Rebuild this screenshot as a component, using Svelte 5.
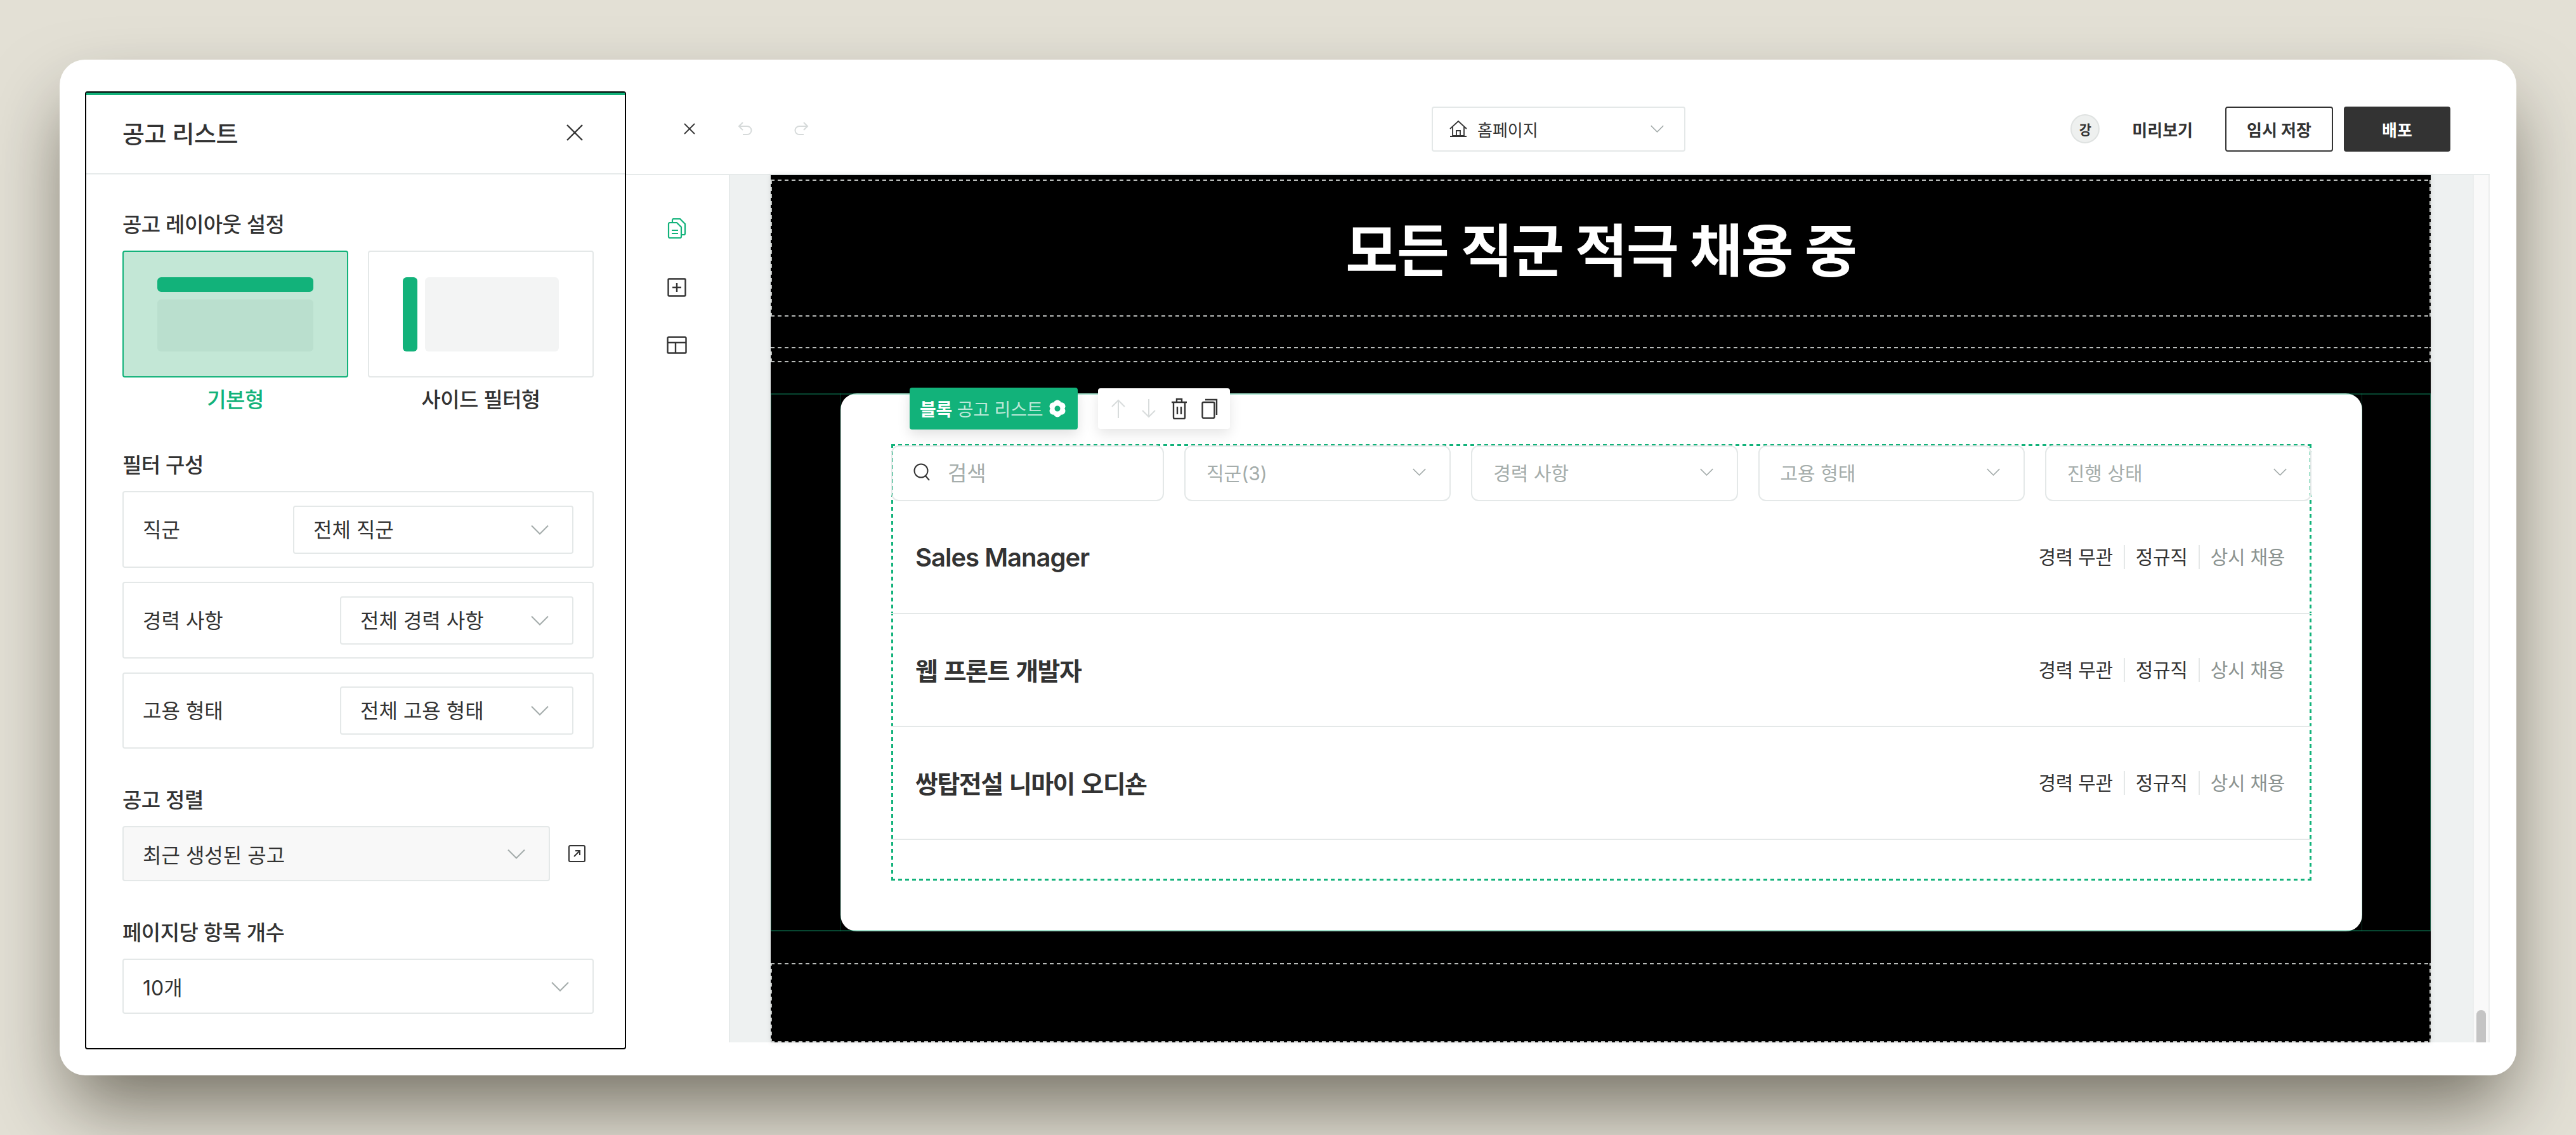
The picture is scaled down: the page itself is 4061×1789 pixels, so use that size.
<script lang="ts">
	const layouts = [
		{ name: '기본형', kind: 'basic', active: true },
		{ name: '사이드 필터형', kind: 'side', active: false }
	];
	const filters = [
		{ label: '직군', value: '전체 직군', wide: true },
		{ label: '경력 사항', value: '전체 경력 사항', wide: false },
		{ label: '고용 형태', value: '전체 고용 형태', wide: false }
	];
	const dropdowns = ['직군(3)', '경력 사항', '고용 형태', '진행 상태'];
	const jobs = [
		{ title: 'Sales Manager', latin: true },
		{ title: '웹 프론트 개발자', latin: false },
		{ title: '쌍탑전설 니마이 오디숀', latin: false }
	];
</script>

{#snippet chevron()}
	<svg class="chevron" width="28" height="16" viewBox="0 0 28 16" fill="none">
		<path d="M1 1.5 14 14.5 27 1.5" stroke="#a3abaa" stroke-width="2" />
	</svg>
{/snippet}

<div class="stage">
	<div class="window">
		<aside class="panel">
			<header class="panel-head">
				<h2>공고 리스트</h2>
				<svg width="26" height="26" viewBox="0 0 26 26" fill="none">
					<path d="M1 1 25 25M25 1 1 25" stroke="#333" stroke-width="2.4" />
				</svg>
			</header>
			<div class="panel-body">
				<section>
					<div class="label">공고 레이아웃 설정</div>
					<div class="layouts">
						{#each layouts as l}
							<div class="layout" class:active={l.active}>
								<div class="thumb {l.kind}">
									<i class="bar"></i>
									<i class="fill"></i>
								</div>
								<div class="caption">{l.name}</div>
							</div>
						{/each}
					</div>
				</section>

				<section>
					<div class="label">필터 구성</div>
					<div class="filter-rows">
						{#each filters as f}
							<div class="filter-row">
								<span>{f.label}</span>
								<div class="select" class:wide={f.wide}>
									<span>{f.value}</span>
									{@render chevron()}
								</div>
							</div>
						{/each}
					</div>
				</section>

				<section>
					<div class="label">공고 정렬</div>
					<div class="sort">
						<div class="select tall muted">
							<span>최근 생성된 공고</span>
							{@render chevron()}
						</div>
						<svg width="27" height="27" viewBox="0 0 27 27" fill="none" stroke="#333" stroke-width="2">
							<rect x="1" y="1" width="25" height="25" rx="2" />
							<path d="M9 18 18 9M11 9h7v7" />
						</svg>
					</div>
				</section>

				<section>
					<div class="label">페이지당 항목 개수</div>
					<div class="select tall">
						<span>10개</span>
						{@render chevron()}
					</div>
				</section>
			</div>
		</aside>

		<main class="main">
			<header class="topbar">
				<div class="tools">
					<button type="button" aria-label="닫기">
						<svg width="18" height="18" viewBox="0 0 18 18" fill="none">
							<path d="M1 1 17 17M17 1 1 17" stroke="#333" stroke-width="1.8" />
						</svg>
					</button>
					<button type="button" aria-label="실행 취소">
						<svg width="24" height="22" viewBox="0 0 24 22" fill="none" stroke="#d6dada" stroke-width="2">
							<path d="M8 1 2 7l6 6M2 7h13a6 6 0 0 1 0 13H8" />
						</svg>
					</button>
					<button type="button" aria-label="다시 실행">
						<svg width="24" height="22" viewBox="0 0 24 22" fill="none" stroke="#d6dada" stroke-width="2">
							<path d="M16 1l6 6-6 6M22 7H9a6 6 0 0 0 0 13h7" />
						</svg>
					</button>
				</div>
				<div class="page-select">
					<svg width="28" height="26" viewBox="0 0 28 26" fill="none" stroke="#333" stroke-width="1.8">
						<path d="M1 13 14 1l13 12M5 10v14h18V10M1 25h26M11 24v-8h6v8" />
					</svg>
					<span>홈페이지</span>
					{@render chevron()}
				</div>
				<div class="actions">
					<span class="avatar">강</span>
					<span class="preview">미리보기</span>
					<button type="button" class="btn">임시 저장</button>
					<button type="button" class="btn dark">배포</button>
				</div>
			</header>

			<div class="editor">
				<nav class="rail">
					<svg width="30" height="32" viewBox="0 0 30 32" fill="none" stroke="#12b27a" stroke-width="2.2">
						<path d="M2 9a2 2 0 0 1 2-2h11l7 7v15a2 2 0 0 1-2 2H4a2 2 0 0 1-2-2Z" />
						<path d="M8 7V3a2 2 0 0 1 2-2h10l8 8v15a2 2 0 0 1-2 2h-4" />
						<path d="M7 19h10M7 24h10" />
					</svg>
					<svg width="30" height="30" viewBox="0 0 30 30" fill="none" stroke="#333" stroke-width="2.4">
						<rect x="1.5" y="1.5" width="27" height="27" rx="1.5" />
						<path d="M15 8v14M8 15h14" />
					</svg>
					<svg width="32" height="28" viewBox="0 0 32 28" fill="none" stroke="#333" stroke-width="2.4">
						<rect x="1.5" y="1.5" width="29" height="25" rx="1.5" />
						<path d="M1.5 10h29M14 10v16.500" />
					</svg>
				</nav>

				<div class="viewport">
					<div class="canvas">
						<section class="dashed hero"><h1>모든 직군 적극 채용 중</h1></section>
						<section class="dashed thin"></section>
						<section class="job">
							<div class="card">
								<div class="tag">
									<span><b>블록</b> <em>공고 리스트</em></span>
									<svg width="28" height="28" viewBox="0 0 28 28">
										<g fill="#fff">
											<circle cx="14" cy="6.500" r="6" />
											<circle cx="14" cy="21.500" r="6" />
											<circle cx="7.500" cy="10.200" r="6" />
											<circle cx="20.500" cy="10.200" r="6" />
											<circle cx="7.500" cy="17.800" r="6" />
											<circle cx="20.500" cy="17.800" r="6" />
										</g>
										<circle cx="14" cy="14" r="4.500" fill="#12b27a" />
									</svg>
								</div>
								<div class="toolbox">
									<span>
										<svg width="24" height="30" viewBox="0 0 24 30" fill="none" stroke="#d8dcdc" stroke-width="2">
											<path d="M12 30V2M2 12 12 2l10 10" />
										</svg>
									</span>
									<span>
										<svg width="24" height="30" viewBox="0 0 24 30" fill="none" stroke="#d8dcdc" stroke-width="2">
											<path d="M12 0v28M2 18l10 10 10-10" />
										</svg>
									</span>
									<span>
										<svg width="26" height="34" viewBox="0 0 26 34" fill="none" stroke="#333" stroke-width="2.400">
											<path d="M1 7h24M9 7V2h8v5M4 7v24a2 2 0 0 0 2 2h14a2 2 0 0 0 2-2V7M10 14v12M16 14v12" />
										</svg>
									</span>
									<span>
										<svg width="26" height="32" viewBox="0 0 26 32" fill="none" stroke="#333" stroke-width="2.400">
											<rect x="1.500" y="6" width="19" height="25" rx="2" />
											<path d="M6 2h18v24" />
										</svg>
									</span>
								</div>

								<div class="list">
									<div class="list-filters">
										<div class="field search">
											<svg width="26" height="28" viewBox="0 0 26 28" fill="none" stroke="#333" stroke-width="2">
												<circle cx="12" cy="12" r="10.500" />
												<path d="M19 20l6 7" />
											</svg>
											<span>검색</span>
										</div>
										{#each dropdowns as d}
											<div class="field drop">
												<span>{d}</span>
												{@render chevron()}
											</div>
										{/each}
									</div>
									{#each jobs as job}
										<div class="job-row">
											<strong class:latin={job.latin}>{job.title}</strong>
											<div class="meta">
												<span>경력 무관</span>
												<span>정규직</span>
												<span class="state">상시 채용</span>
											</div>
										</div>
									{/each}
								</div>
							</div>
						</section>
						<section class="dashed last"></section>
					</div>
				</div>

				<div class="scrollbar"><i></i></div>
			</div>
		</main>
	</div>
</div>

<style>
	:global(body) {
		margin: 0;
		background: #e3e0d5;
	}
	.stage {
		box-sizing: border-box;
		width: 4061px;
		height: 1789px;
		padding: 94px;
		overflow: hidden;
		background: #e3e0d5;
		font-family: Inter, 'Noto Sans CJK KR', sans-serif;
		color: #333;
		font-size: 32px;
	}
	.window {
		display: flex;
		align-items: flex-start;
		height: 1601px;
		border-radius: 40px;
		background: #fff;
		box-shadow: 0 60px 120px -15px rgba(20, 15, 0, 0.55);
	}
	button {
		font: inherit;
		color: inherit;
	}

	/* settings panel */
	.panel {
		box-sizing: border-box;
		flex: none;
		width: 853px;
		height: 1510px;
		margin: 50px 0 0 40px;
		border: 2px solid #000;
		border-radius: 4px;
	}
	.panel-head {
		box-sizing: border-box;
		display: flex;
		align-items: center;
		justify-content: space-between;
		height: 129px;
		padding: 0 66px 6px 57px;
		border-top: 4px solid #12b27a;
		border-bottom: 2px solid #e6eaea;
	}
	h2 {
		margin: 0;
		font-size: 38px;
		font-weight: 500;
		letter-spacing: -0.5px;
	}
	.panel-body {
		display: flex;
		flex-direction: column;
		gap: 58px;
		padding: 56px 49px 0 57px;
	}
	.label {
		height: 44px;
		margin-bottom: 20px;
		line-height: 47px;
		font-size: 33px;
		font-weight: 500;
		letter-spacing: -0.5px;
	}
	.layouts {
		display: flex;
		gap: 31px;
	}
	.layout {
		flex: 1;
	}
	.thumb {
		box-sizing: border-box;
		position: relative;
		height: 200px;
		padding: 40px 53px 39px;
		border: 2px solid #e4e8e8;
		border-radius: 4px;
		display: flex;
		gap: 12px;
	}
	.thumb.basic {
		flex-direction: column;
	}
	.thumb i {
		display: block;
		border-radius: 6px;
	}
	.thumb .bar {
		background: #12b27a;
	}
	.thumb .fill {
		flex: 1;
		background: #f3f4f4;
	}
	.basic .bar {
		height: 23px;
	}
	.side .bar {
		width: 23px;
	}
	.active .thumb {
		background: #c3e7d6;
		border-color: #12b27a;
	}
	.active .fill {
		background: #badfce;
	}
	.caption {
		height: 44px;
		margin-top: 13px;
		line-height: 44px;
		text-align: center;
		font-size: 33px;
		font-weight: 500;
		letter-spacing: -0.5px;
	}
	.active .caption {
		color: #12b27a;
	}
	.filter-rows {
		display: flex;
		flex-direction: column;
		gap: 22px;
	}
	.filter-row {
		box-sizing: border-box;
		display: flex;
		align-items: center;
		justify-content: space-between;
		height: 121px;
		padding: 0 30px;
		border: 2px solid #e4e8e8;
		border-radius: 4px;
	}
	.filter-row:last-child {
		height: 120px;
	}
	.filter-row span {
		margin-top: -4px;
	}
	.select {
		box-sizing: border-box;
		display: flex;
		align-items: center;
		justify-content: space-between;
		width: 368px;
		height: 76px;
		padding: 0 37px 0 30px;
		border: 2px solid #e4e8e8;
		border-radius: 4px;
	}
	.select.wide {
		width: 442px;
	}
	.select.tall {
		width: 100%;
		height: 87px;
	}
	.select.muted {
		background: #f8f8f8;
	}
	.sort {
		display: flex;
		align-items: center;
		gap: 29px;
	}
	.sort .select {
		flex: none;
		width: 674px;
	}

	/* top bar */
	.main {
		flex: 1;
		display: flex;
		flex-direction: column;
		height: 1549px;
		padding-right: 42px;
	}
	.topbar {
		box-sizing: border-box;
		display: grid;
		grid-template-columns: 1270px 400px 1fr;
		align-items: center;
		flex: none;
		height: 182px;
		padding-top: 38px;
		border-bottom: 2px solid #e6eaea;
	}
	.tools {
		display: flex;
		gap: 44px;
		padding-left: 78px;
	}
	.tools button {
		display: flex;
		align-items: center;
		justify-content: center;
		width: 44px;
		height: 44px;
		padding: 0;
		border: 0;
		background: none;
	}
	.page-select {
		box-sizing: border-box;
		display: flex;
		align-items: center;
		gap: 16px;
		height: 71px;
		padding: 0 32px 0 26px;
		border: 2px solid #e4e8e8;
		border-radius: 4px;
		font-size: 26px;
	}
	.page-select .chevron,
	.field .chevron {
		width: 21px;
		height: 12px;
	}
	.page-select .chevron {
		margin-left: auto;
	}
	.actions {
		display: flex;
		align-items: center;
		justify-content: flex-end;
		padding-right: 62px;
		font-size: 26px;
		font-weight: 700;
	}
	.avatar {
		box-sizing: border-box;
		display: flex;
		align-items: center;
		justify-content: center;
		width: 46px;
		height: 46px;
		border: 2px solid #dfe2e1;
		border-radius: 50%;
		background: #eef0ef;
		font-size: 21px;
	}
	.preview {
		margin: 0 51px;
	}
	.btn {
		box-sizing: border-box;
		width: 170px;
		height: 71px;
		border: 2px solid #333;
		border-radius: 4px;
		background: #fff;
		font-weight: 700;
	}
	.btn.dark {
		width: 168px;
		margin-left: 17px;
		background: #333;
		color: #fff;
	}

	/* editor */
	.editor {
		flex: 1;
		display: flex;
		min-height: 0;
	}
	.rail {
		box-sizing: border-box;
		flex: none;
		display: flex;
		flex-direction: column;
		align-items: center;
		gap: 62px;
		width: 164px;
		padding: 68px 2px 0 0;
		border-right: 2px solid #e6eaea;
	}
	.viewport {
		flex: 1;
		min-width: 0;
		padding: 0 66px 0 64px;
		background: #eef1f1;
	}
	.canvas {
		height: 100%;
		padding-top: 7px;
		box-sizing: border-box;
		overflow: hidden;
		background: #000;
		box-shadow: 0 0 8px rgba(0, 0, 0, 0.1);
	}
	.dashed {
		--dash: #b9bcba;
		box-sizing: border-box;
	}
	.dashed,
	.list {
		background:
			repeating-linear-gradient(90deg, var(--dash) 0 6px, transparent 6px 11px) top / 100% var(--w) no-repeat,
			repeating-linear-gradient(90deg, var(--dash) 0 6px, transparent 6px 11px) bottom / 100% var(--w) no-repeat,
			repeating-linear-gradient(0deg, var(--dash) 0 6px, transparent 6px 11px) left / var(--w) 100% no-repeat,
			repeating-linear-gradient(0deg, var(--dash) 0 6px, transparent 6px 11px) right / var(--w) 100% no-repeat;
		--w: 2px;
	}
	.hero {
		display: flex;
		align-items: center;
		justify-content: center;
		height: 216px;
	}
	h1 {
		margin: -4px 0 0;
		color: #fff;
		font-size: 90px;
		font-weight: 700;
		letter-spacing: -2px;
	}
	.thin {
		height: 24px;
		margin-top: 48px;
	}
	.job {
		position: relative;
		height: 848px;
		margin: 49px 0 50px;
		padding: 0 108px 0 110px;
	}
	.job::before,
	.job::after {
		content: '';
		position: absolute;
		top: 0;
		bottom: 0;
		z-index: 1;
		pointer-events: none;
	}
	.job::before {
		left: 0;
		right: 0;
		border: solid rgba(18, 178, 122, 0.4);
		border-width: 2px 1px;
	}
	.job::after {
		left: 110px;
		right: 108px;
		border: solid rgba(18, 178, 122, 0.3);
		border-width: 0 1px;
	}
	.card {
		box-sizing: border-box;
		position: relative;
		height: 100%;
		padding: 80px;
		border-radius: 26px;
		background: #fff;
	}
	.tag {
		position: absolute;
		left: 109px;
		top: -9px;
		z-index: 2;
		box-sizing: border-box;
		display: flex;
		align-items: center;
		justify-content: space-between;
		height: 66px;
		padding: 0 18px 0 16px;
		width: 265px;
		border-radius: 4px;
		background: #12b27a;
		box-shadow: 0 8px 20px rgba(0, 0, 0, 0.12);
		color: #fff;
		font-size: 28px;
		letter-spacing: -0.2px;
	}
	.tag b {
		font-weight: 700;
	}
	.tag em {
		font-style: normal;
		color: rgba(255, 255, 255, 0.72);
	}
	.toolbox {
		position: absolute;
		left: 406px;
		top: -8px;
		z-index: 2;
		display: flex;
		align-items: center;
		height: 64px;
		padding: 0 8px;
		border-radius: 4px;
		background: #fff;
		box-shadow: 0 8px 20px rgba(0, 0, 0, 0.1);
	}
	.toolbox span {
		display: flex;
		align-items: center;
		justify-content: center;
		width: 48px;
	}
	.list {
		--dash: #12b27a;
		--w: 3px;
		box-sizing: border-box;
		height: 100%;
		padding-top: 2px;
	}
	.list-filters {
		display: grid;
		grid-template-columns: 430px repeat(4, 1fr);
		gap: 32px;
	}
	.field {
		box-sizing: border-box;
		display: flex;
		align-items: center;
		height: 88px;
		padding: 0 37px 4px 33px;
		border: 2px solid #e4e8e8;
		border-radius: 12px;
		color: #a5adab;
		font-size: 30px;
	}
	.field.search {
		gap: 28px;
		font-size: 33px;
	}
	.field.drop {
		justify-content: space-between;
	}
	.job-row {
		box-sizing: border-box;
		display: flex;
		align-items: center;
		justify-content: space-between;
		height: 178px;
		padding: 0 42px 0 38px;
		border-bottom: 2px solid #e4e8e8;
	}
	.job-row strong {
		margin-top: -3px;
		font-size: 39px;
		font-weight: 600;
		letter-spacing: -1.5px;
		word-spacing: 2px;
	}
	.job-row strong.latin {
		margin-top: 0;
		font-size: 40px;
		letter-spacing: -1px;
		word-spacing: 0;
	}
	.meta {
		display: flex;
		align-items: center;
		font-size: 30px;
		letter-spacing: -0.3px;
	}
	.meta span {
		padding: 0 17px;
		line-height: 38px;
		border-left: 2px solid #e5e8e8;
	}
	.meta span:first-child {
		border-left: 0;
	}
	.meta span:last-child {
		padding-right: 0;
	}
	.meta .state {
		color: #8b9391;
	}
	.last {
		height: 125px;
	}
	.scrollbar {
		box-sizing: border-box;
		flex: none;
		display: flex;
		flex-direction: column;
		justify-content: flex-end;
		width: 27px;
		padding: 0 4px;
		background: #f9f9f9;
		border: solid #eceeee;
		border-width: 0 2px;
	}
	.scrollbar i {
		display: block;
		height: 51px;
		border-radius: 8px 8px 0 0;
		background: #c4c4c4;
	}
</style>
